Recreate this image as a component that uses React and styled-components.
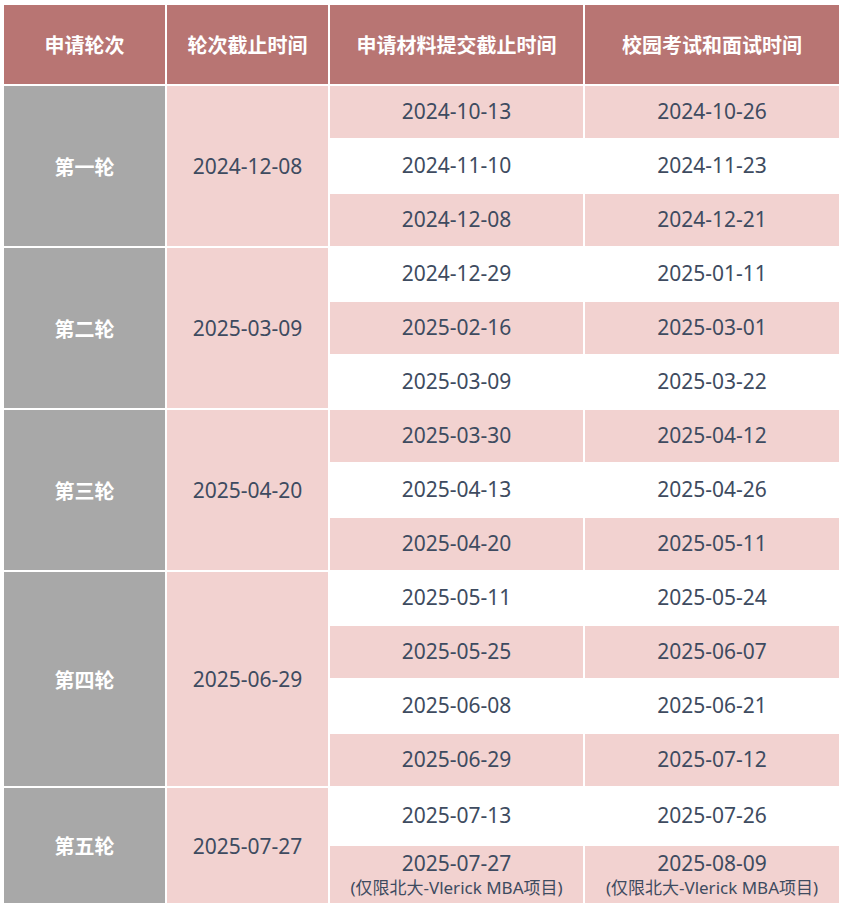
import React from "react";
import styled, { createGlobalStyle } from "styled-components";

const Global = createGlobalStyle`
  html, body { margin: 0; padding: 0; background: #ffffff; }
  body { font-family: "Noto Sans", "Noto Sans CJK SC", sans-serif; }
`;

const Table = styled.table`
  border-collapse: separate;
  border-spacing: 2px;
  table-layout: fixed;
  width: 839px;
  margin: 3px 0 0 2px;
  font-family: "Noto Sans", "Noto Sans CJK SC", sans-serif;
`;

const HeadCell = styled.th`
  background: #b87573;
  color: #ffffff;
  font-family: "Noto Sans CJK SC", "Noto Sans", sans-serif;
  font-weight: 700;
  font-size: 20px;
  height: 79px;
  padding: 0;
  text-align: center;
  vertical-align: middle;
`;

const RoundCell = styled.td`
  background: #a8a8a8;
  color: #ffffff;
  font-family: "Noto Sans CJK SC", "Noto Sans", sans-serif;
  font-weight: 700;
  font-size: 20px;
  text-align: center;
  vertical-align: middle;
  padding: 0;
`;

const DeadlineCell = styled.td`
  background: #f2d2d0;
  color: #3e4b60;
  font-size: 21px;
  text-align: center;
  vertical-align: middle;
  padding: 0;
`;

const DateCell = styled.td`
  background: ${(p) => (p.$pink ? "#f2d2d0" : "#ffffff")};
  color: #3e4b60;
  font-size: 21px;
  height: ${(p) => p.$h}px;
  text-align: center;
  vertical-align: middle;
  padding: 0;
  line-height: 1.2;
`;

const Note = styled.div`
  font-size: 17px;
  line-height: 21px;
  font-family: "Noto Sans", "Noto Sans CJK SC", sans-serif;
`;

const rounds = [
  {
    name: "第一轮",
    deadline: "2024-12-08",
    rows: [
      ["2024-10-13", "2024-10-26"],
      ["2024-11-10", "2024-11-23"],
      ["2024-12-08", "2024-12-21"],
    ],
  },
  {
    name: "第二轮",
    deadline: "2025-03-09",
    rows: [
      ["2024-12-29", "2025-01-11"],
      ["2025-02-16", "2025-03-01"],
      ["2025-03-09", "2025-03-22"],
    ],
  },
  {
    name: "第三轮",
    deadline: "2025-04-20",
    rows: [
      ["2025-03-30", "2025-04-12"],
      ["2025-04-13", "2025-04-26"],
      ["2025-04-20", "2025-05-11"],
    ],
  },
  {
    name: "第四轮",
    deadline: "2025-06-29",
    rows: [
      ["2025-05-11", "2025-05-24"],
      ["2025-05-25", "2025-06-07"],
      ["2025-06-08", "2025-06-21"],
      ["2025-06-29", "2025-07-12"],
    ],
  },
  {
    name: "第五轮",
    deadline: "2025-07-27",
    rows: [
      ["2025-07-13", "2025-07-26", 56],
      ["2025-07-27", "2025-08-09", 57, "(仅限北大-Vlerick MBA项目)"],
    ],
  },
];

export default function App() {
  let idx = 0;
  return (
    <>
      <Global />
      <Table>
        <colgroup>
          <col style={{ width: 161 }} />
          <col style={{ width: 161 }} />
          <col style={{ width: 253 }} />
          <col style={{ width: 254 }} />
        </colgroup>
        <thead>
          <tr>
            <HeadCell>申请轮次</HeadCell>
            <HeadCell>轮次截止时间</HeadCell>
            <HeadCell>申请材料提交截止时间</HeadCell>
            <HeadCell>校园考试和面试时间</HeadCell>
          </tr>
        </thead>
        <tbody>
          {rounds.map((r) =>
            r.rows.map((row, i) => {
              const pink = idx % 2 === 0;
              idx += 1;
              const h = row[2] || 52;
              const note = row[3];
              return (
                <tr key={r.name + i}>
                  {i === 0 && (
                    <RoundCell rowSpan={r.rows.length}>{r.name}</RoundCell>
                  )}
                  {i === 0 && (
                    <DeadlineCell rowSpan={r.rows.length}>{r.deadline}</DeadlineCell>
                  )}
                  <DateCell $pink={pink} $h={h}>
                    {row[0]}
                    {note && <Note>{note}</Note>}
                  </DateCell>
                  <DateCell $pink={pink} $h={h}>
                    {row[1]}
                    {note && <Note>{note}</Note>}
                  </DateCell>
                </tr>
              );
            })
          )}
        </tbody>
      </Table>
    </>
  );
}
